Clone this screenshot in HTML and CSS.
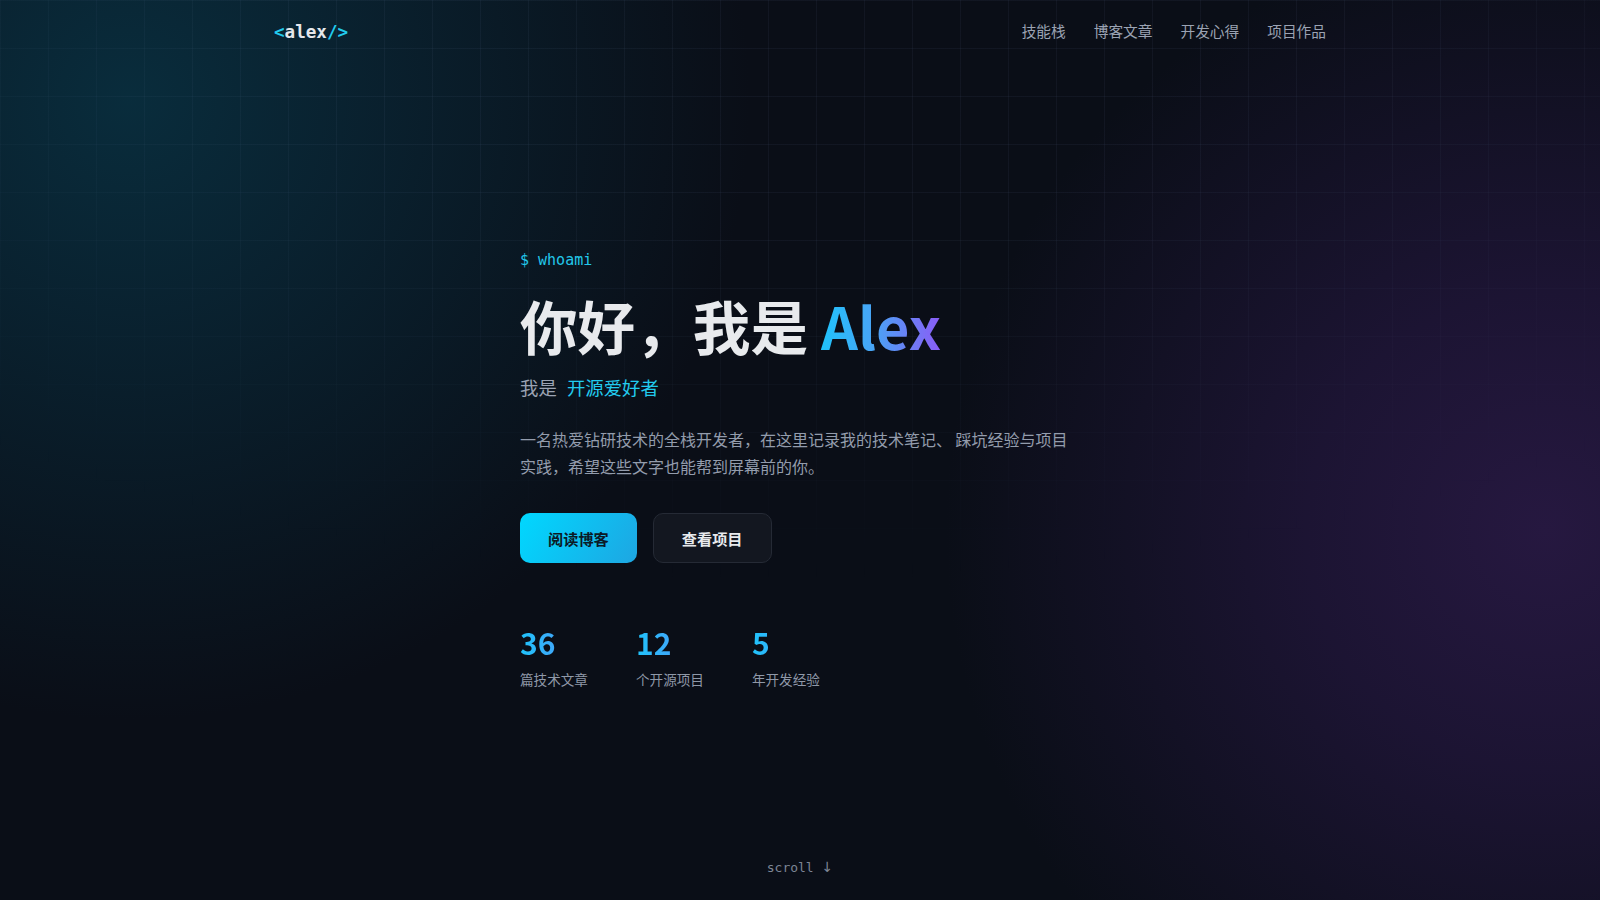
FILE: index.html
```html
<!DOCTYPE html>
<html lang="zh-CN">
<head>
<meta charset="utf-8">
<title>alex</title>
<link rel="stylesheet" href="styles.css">
</head>
<body>
<div class="page">
  <div class="bg-grid"></div>
  <header class="topbar">
    <div class="container topbar-inner">
      <a class="logo" href="#"><span class="logo-mark">&lt;</span>alex<span class="logo-mark">/&gt;</span></a>
      <nav class="nav">
        <a href="#">技能栈</a>
        <a href="#">博客文章</a>
        <a href="#">开发心得</a>
        <a href="#">项目作品</a>
      </nav>
    </div>
  </header>
  <main class="hero">
    <div class="hero-inner">
      <div class="prompt">$ whoami</div>
      <h1 class="title">你好，我是 <span class="grad">Alex</span></h1>
      <p class="subtitle">我是 <span class="role">开源爱好者</span></p>
      <p class="intro">一名热爱钻研技术的全栈开发者，在这里记录我的技术笔记、 踩坑经验与项目实践，希望这些文字也能帮到屏幕前的你。</p>
      <div class="actions">
        <a class="btn btn-primary" href="#">阅读博客</a>
        <a class="btn btn-ghost" href="#">查看项目</a>
      </div>
      <div class="stats">
        <div class="stat"><span class="stat-num">36</span><span class="stat-label">篇技术文章</span></div>
        <div class="stat"><span class="stat-num">12</span><span class="stat-label">个开源项目</span></div>
        <div class="stat"><span class="stat-num">5</span><span class="stat-label">年开发经验</span></div>
      </div>
    </div>
  </main>
  <div class="scroll-hint">scroll <span class="arrow">↓</span></div>
</div>
</body>
</html>
```
FILE: styles.css
```css
* { box-sizing: border-box; }
html, body { margin: 0; padding: 0; }
body {
  background: #0a0e17;
  color: #e8eaed;
  font-family: "Noto Sans CJK SC", "Noto Sans", sans-serif;
}
a { text-decoration: none; color: inherit; }

.page {
  position: relative;
  min-height: 100vh;
  overflow: hidden;
  background:
    radial-gradient(circle at 130px 100px, rgba(9, 46, 62, 0.95) 0, rgba(9, 42, 58, 0.7) 220px, rgba(10, 14, 23, 0) 620px),
    radial-gradient(circle at 1545px 530px, rgba(38, 24, 64, 1) 0, rgba(34, 22, 60, 0.75) 240px, rgba(10, 14, 23, 0) 600px),
    #0a0e17;
}

.bg-grid {
  position: absolute;
  inset: 0;
  background-image:
    linear-gradient(to right, rgba(120, 140, 180, 0.075) 1px, transparent 1px),
    linear-gradient(to bottom, rgba(120, 140, 180, 0.075) 1px, transparent 1px);
  background-size: 48px 48px;
  -webkit-mask-image: radial-gradient(ellipse 80% 65% at 50% 0%, #000 40%, transparent 100%);
  mask-image: radial-gradient(ellipse 80% 65% at 50% 0%, #000 40%, transparent 100%);
  pointer-events: none;
}

.container {
  max-width: 1100px;
  margin: 0 auto;
  padding: 0 24px;
}

.topbar { position: relative; z-index: 1; }
.topbar-inner {
  height: 64px;
  display: flex;
  align-items: center;
  justify-content: space-between;
}
.logo {
  font-family: "DejaVu Sans Mono", "Liberation Mono", monospace;
  font-weight: 700;
  font-size: 17.6px;
  color: #e5e7eb;
}
.logo-mark { color: #22cbee; }
.nav { display: flex; gap: 28px; padding-bottom: 4px; }
.nav a {
  font-size: 14.7px;
  color: #9ba3b3;
}

.hero { position: relative; z-index: 1; }
.hero-inner {
  max-width: 560px;
  margin: 0 auto;
  padding-top: 185px;
}
.prompt {
  font-family: "DejaVu Sans Mono", "Liberation Mono", monospace;
  font-size: 15px;
  line-height: 22px;
  color: #22c7ea;
  margin-bottom: 20px;
}
.title {
  margin: 0 0 14px;
  font-size: 57.6px;
  line-height: 1.2;
  font-weight: 700;
  color: #e8eaed;
  letter-spacing: 0;
}
.grad {
  background: linear-gradient(90deg, #1fc3fb 0%, #4aa3f5 45%, #8b5cf6 100%);
  -webkit-background-clip: text;
  background-clip: text;
  color: transparent;
}
.subtitle {
  margin: 0 0 24px;
  font-size: 18.4px;
  line-height: 1.5;
  color: #9ba3b3;
}
.role { color: #22cbee; margin-left: 6px; }
.intro {
  margin: 0 0 33px;
  font-size: 16px;
  line-height: 1.7;
  color: #939cac;
}
.actions { display: flex; gap: 16px; }
.btn {
  display: inline-flex;
  align-items: center;
  justify-content: center;
  height: 50px;
  padding: 0 28px;
  border-radius: 10px;
  font-size: 15.2px;
  font-weight: 700;
}
.btn-primary {
  background: linear-gradient(120deg, #00d8ff 0%, #1ea6e2 100%);
  color: #0b1a26;
}
.btn-ghost {
  background: #131720;
  border: 1px solid #252a35;
  color: #e8eaed;
}

.stats {
  display: flex;
  gap: 48px;
  margin-top: 61px;
}
.stat { display: flex; flex-direction: column; }
.stat-num {
  display: block;
  font-size: 30px;
  line-height: 1.2;
  font-weight: 700;
  background: linear-gradient(90deg, #1fc3fb 0%, #5b8ff7 100%);
  -webkit-background-clip: text;
  background-clip: text;
  color: transparent;
  margin-bottom: 9px;
}
.stat-label {
  font-size: 13.6px;
  line-height: 1.5;
  color: #8f98a8;
}

.scroll-hint {
  position: absolute;
  left: 50%;
  bottom: 22px;
  transform: translateX(-50%);
  font-family: "DejaVu Sans Mono", "Liberation Mono", monospace;
  font-size: 13px;
  line-height: 20px;
  color: #7d8595;
  z-index: 1;
}
.arrow { font-family: "DejaVu Sans", sans-serif; font-size: 14px; }
```
